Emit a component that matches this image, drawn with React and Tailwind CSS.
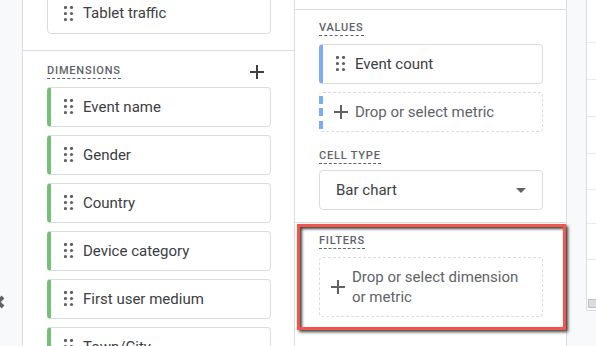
import React from "react";

const Handle = () => (
	<svg width="10" height="16" viewBox="0 0 10 16" className="shrink-0">
		{[1.5, 7.5, 13.5].map((y) =>
			[1.5, 7.5].map((x) => (
				<circle key={`${x}-${y}`} cx={x} cy={y} r="1.6" fill="#5f6368" />
			)),
		)}
	</svg>
);

const Plus = ({color = "#5f6368"}) => (
	<svg width="14" height="14" viewBox="0 0 14 14" className="shrink-0">
		<path d="M7 0v14M0 7h14" stroke={color} strokeWidth="2" />
	</svg>
);

const Label = ({children}) => (
	<span className="self-start border-b border-dashed border-[#5f6368] text-[11px] leading-[14px] font-medium tracking-[0.8px] text-[#5f6368] uppercase">
		{children}
	</span>
);

function Chip({label, accent}) {
	return (
		<div
			className={`flex h-[40px] w-[224px] items-center gap-[9px] rounded-[4px] border border-[#dadce0] border-l-4 pl-[13px] ${accent}`}
		>
			<Handle />
			<span className="text-[15px] text-[#3c4043]">{label}</span>
		</div>
	);
}

const dimensions = [
	"Event name",
	"Gender",
	"Country",
	"Device category",
	"First user medium",
	"Town/City",
];

export default function App() {
	return (
		<div className="flex h-[346px] w-[596px] overflow-hidden bg-white font-['Roboto',sans-serif]">
			{/* Left rail */}
			<div className="flex w-[23px] shrink-0 flex-col border-r border-[#dadce0] bg-[#f8f9fa]">
				<svg width="16" height="16" viewBox="0 0 16 16" className="mt-[294px] -ml-[10px]">
					<path d="M3 3l10 10M13 3L3 13" stroke="#5f6368" strokeWidth="4" />
				</svg>
			</div>

			{/* Variables column */}
			<div className="flex w-[272px] shrink-0 flex-col border-r border-[#dadce0]">
				<div className="h-[51px] shrink-0 border-b border-[#dadce0] pl-[24px]">
					<div className="-mt-[7px] flex h-[41px] w-[224px] items-center gap-[9px] rounded-[4px] border border-[#dadce0] pl-[16px]">
						<Handle />
						<span className="text-[15px] text-[#3c4043]">Tablet traffic</span>
					</div>
				</div>
				<div className="flex flex-col pl-[24px] pt-[13px]">
					<div className="flex w-[224px] items-center justify-between pr-[7px]">
						<Label>Dimensions</Label>
						<Plus color="#3c4043" />
					</div>
					<div className="mt-[8px] flex flex-col gap-[8px]">
						{dimensions.map((d) => (
							<Chip key={d} label={d} accent="border-l-[#72c275]" />
						))}
					</div>
				</div>
			</div>

			{/* Tab settings column */}
			<div className="flex w-[272px] shrink-0 flex-col border-r border-[#dadce0]">
				<div className="h-[10px] shrink-0 border-b border-[#dadce0]" />
				<div className="flex flex-col border-b border-[#dadce0] pl-[24px] pt-[11px] pb-[12px]">
					<Label>Values</Label>
					<div className="mt-[8px] flex flex-col gap-[8px]">
						<Chip label="Event count" accent="border-l-[#7baaf7]" />
						<div className="flex h-[40px] w-[224px] items-center rounded-[4px] border border-l-0 border-dashed border-[#dadce0]">
							<div className="mt-[3px] h-[34px] w-[4px] shrink-0 self-start bg-[repeating-linear-gradient(to_bottom,#7baaf7_0_8px,transparent_8px_12.5px)]" />
							<div className="ml-[11px] flex items-center gap-[7px]">
								<Plus />
								<span className="text-[15px] text-[#5f6368]">Drop or select metric</span>
							</div>
						</div>
					</div>
					<div className="mt-[17px] flex flex-col">
						<Label>Cell type</Label>
					</div>
					<div className="mt-[6px] flex h-[40px] w-[224px] items-center justify-between rounded-[4px] border border-[#dadce0] pl-[16px] pr-[16px]">
						<span className="text-[15px] text-[#3c4043]">Bar chart</span>
						<svg width="10" height="5" viewBox="0 0 10 5">
							<path d="M0 0h10L5 5z" fill="#5f6368" />
						</svg>
					</div>
				</div>

				<div className="relative flex flex-col pl-[24px] pt-[11px]">
					<Label>Filters</Label>
					<div className="mt-[8px] flex h-[60px] w-[224px] items-center gap-[7px] rounded-[4px] border border-dashed border-[#dadce0] pl-[11px]">
						<Plus />
						<span className="w-[180px] text-[15px] leading-[20px] text-[#5f6368]">
							Drop or select dimension or metric
						</span>
					</div>
					{/* highlight annotation */}
					<div className="pointer-events-none absolute top-[1px] left-[2px] h-[106px] w-[269px] border-[3px] border-[#f2564b] shadow-[2px_2px_3px_rgba(0,0,0,0.75),inset_2px_2px_3px_rgba(0,0,0,0.75)]" />
				</div>
			</div>

			{/* Gutter */}
			<div className="w-[19px] shrink-0 bg-[#f8f9fa]" />

			{/* Canvas edge */}
			<div className="flex flex-1 flex-col bg-[#f8f9fa]">
				<div className="flex h-[311px] flex-col border-b border-l border-[#dadce0] bg-white">
					<div className="h-[43px] shrink-0 border-b border-[#e8eaed]" />
					<div className="h-[37px] shrink-0 border-b border-[#e8eaed]" />
					<div className="h-[37px] shrink-0 border-b border-[#e8eaed]" />
					<div className="h-[37px] shrink-0 border-b border-[#e8eaed]" />
					<div className="h-[36px] shrink-0 border-b border-[#e8eaed]" />
					<div className="h-[34px] shrink-0 border-b border-[#e8eaed]" />
					<div className="h-[36px] shrink-0 border-b border-[#e8eaed]" />
					<div className="mt-[39px] ml-[1px] h-[9px] w-[9px] border border-[#bdc1c6] bg-[#dadce0]" />
				</div>
			</div>
		</div>
	);
}
